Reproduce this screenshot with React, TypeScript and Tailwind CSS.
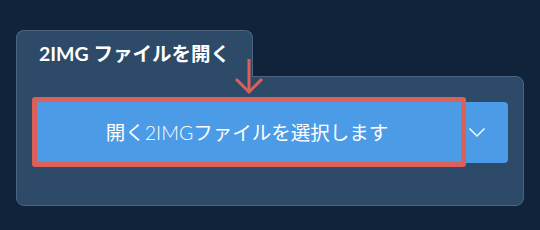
export default function App() {
  return (
    <div
      className="relative w-[540px] h-[230px] bg-[#11233a] pt-[30px] pl-[16px]"
      style={{ fontFamily: 'Lato, "Noto Sans CJK JP", sans-serif' }}
    >
      {/* Tab */}
      <div className="relative z-10 -mb-px flex h-[47px] w-[237px] items-center rounded-t-lg border border-b-0 border-[#4a6482] bg-[#2d4a69] pl-[22px]">
        <span className="text-[19.5px] font-bold text-white">2IMG ファイルを開く</span>
      </div>

      {/* Panel */}
      <div className="h-[130px] w-[508px] rounded-tr-lg rounded-b-lg border border-[#4a6482] bg-[#2d4a69] px-[15px] pt-[25px]">
        <div className="flex h-[61px]">
          <button className="flex flex-1 items-center justify-center rounded-l bg-[#4c9be6] text-[19.5px] font-normal text-white">
            開く<span className="font-light">2IMG</span>ファイルを選択します
          </button>
          <button className="flex w-[46px] items-center rounded-r bg-[#4c9be6] pl-[7px]">
            <svg width="16" height="9" viewBox="0 0 16 9" fill="none">
              <polyline points="0.5,0.5 8,8 15.5,0.5" stroke="white" strokeWidth="1.4" />
            </svg>
          </button>
        </div>
      </div>

      {/* Highlight annotation */}
      <div className="pointer-events-none absolute z-20 left-[32px] top-[97px] h-[70px] w-[434px] rounded-[3px] border-[5px] border-[#dc605a]" />

      {/* Arrow annotation */}
      <svg className="absolute z-20 left-[233px] top-[58px]" width="32" height="38" viewBox="0 0 32 38" fill="none">
        <line x1="16" y1="1" x2="16" y2="35" stroke="#dc605a" strokeWidth="3" />
        <polyline points="3,21 16,34 29,21" stroke="#dc605a" strokeWidth="3" />
      </svg>
    </div>
  );
}
